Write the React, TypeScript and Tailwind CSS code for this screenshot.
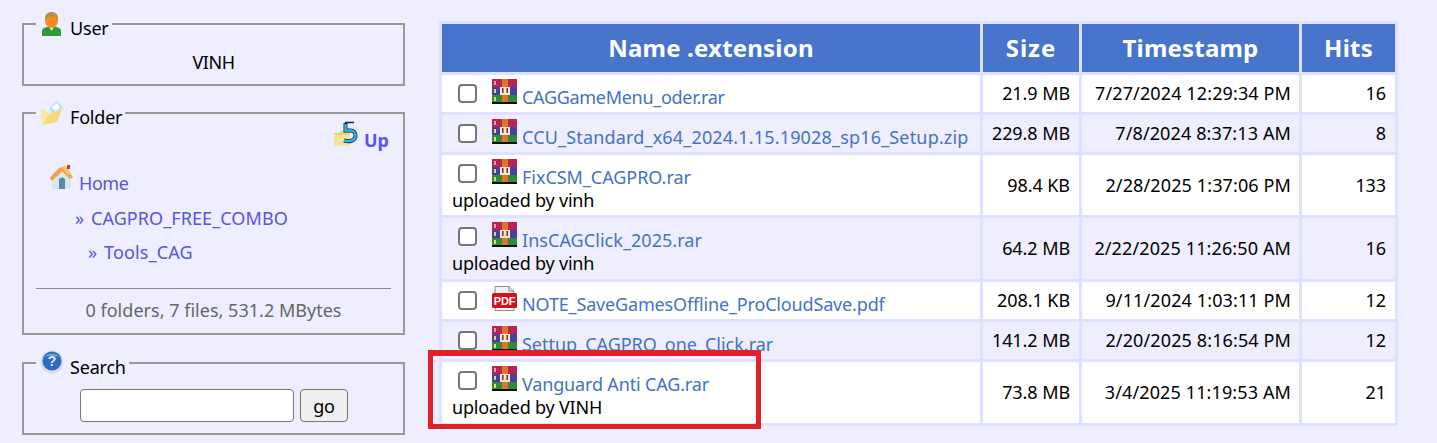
const files = [
  { name: "CAGGameMenu_oder.rar", size: "21.9 MB", time: "7/27/2024 12:29:34 PM", hits: "16", h: "h-[37px]", alt: false, icon: "rar", by: "", track: "tracking-[-0.3px]" },
  { name: "CCU_Standard_x64_2024.1.15.19028_sp16_Setup.zip", size: "229.8 MB", time: "7/8/2024 8:37:13 AM", hits: "8", h: "h-[37px]", alt: true, icon: "rar", by: "", track: "tracking-[0.17px]" },
  { name: "FixCSM_CAGPRO.rar", size: "98.4 KB", time: "2/28/2025 1:37:06 PM", hits: "133", h: "h-[60px]", alt: false, icon: "rar", by: "uploaded by vinh", track: "tracking-[-0.04px]" },
  { name: "InsCAGClick_2025.rar", size: "64.2 MB", time: "2/22/2025 11:26:50 AM", hits: "16", h: "h-[61px]", alt: true, icon: "rar", by: "uploaded by vinh", track: "tracking-[0.05px]" },
  { name: "NOTE_SaveGamesOffline_ProCloudSave.pdf", size: "208.1 KB", time: "9/11/2024 1:03:11 PM", hits: "12", h: "h-[37px]", alt: false, icon: "pdf", by: "", track: "tracking-[-0.16px]" },
  { name: "Settup_CAGPRO_one_Click.rar", size: "141.2 MB", time: "2/20/2025 8:16:54 PM", hits: "12", h: "h-[37px]", alt: true, icon: "rar", by: "", track: "tracking-[-0.01px]" },
  { name: "Vanguard Anti CAG.rar", size: "73.8 MB", time: "3/4/2025 11:19:53 AM", hits: "21", h: "h-[61px]", alt: false, icon: "rar", by: "uploaded by VINH", track: "tracking-[-0.16px]" },
];

function RarIcon() {
  return (
    <svg width="25" height="25" viewBox="0 0 25 25" className="block">
      <rect x="0" y="0" width="25" height="8" fill="#b5254f" />
      <rect x="0" y="8" width="25" height="8" fill="#4a3f9f" />
      <rect x="0" y="16" width="25" height="7" fill="#2f8a3c" />
      <rect x="0" y="23" width="25" height="2" fill="#111111" />
      <rect x="10" y="0" width="6" height="23" fill="#e0752a" />
      <rect x="8" y="8" width="10" height="8" fill="#f4e8d8" />
      <rect x="10" y="9" width="1.5" height="5" fill="#7a3010" />
      <rect x="14.5" y="9" width="1.5" height="5" fill="#7a3010" />
      <rect x="2" y="10" width="2" height="4" fill="#e8d070" />
      <rect x="2" y="18" width="2" height="4" fill="#d8e070" />
      <rect x="2" y="2" width="2" height="4" fill="#e8a0a0" />
    </svg>
  );
}

function PdfIcon() {
  return (
    <svg width="25" height="25" viewBox="0 0 25 25" className="block">
      <path d="M3 0.5H17L22 5V24.5H3Z" fill="#f2f2f2" stroke="#8a8a8a" />
      <path d="M17 0.5V5H22" fill="#dddddd" stroke="#8a8a8a" />
      <rect x="0" y="7" width="25" height="15" rx="1.5" fill="#d0141c" />
      <text x="12.5" y="18.5" textAnchor="middle" fontSize="11" fontWeight="700" fill="#ffffff" fontFamily="Liberation Sans, sans-serif">PDF</text>
    </svg>
  );
}

function UserIcon() {
  return (
    <svg width="24" height="26" viewBox="0 0 24 26" className="block">
      <path d="M2 25V20C2 17 6 15.5 11.5 15.5S21 17 21 20V25Z" fill="#2e9a3a" />
      <path d="M9 15.5H14L11.5 20Z" fill="#e8f5e0" />
      <ellipse cx="11.5" cy="9" rx="6.5" ry="8" fill="#f58a20" />
      <path d="M5 8C5 3 8 1 11.5 1S18 3 18 8C15 5 9 5 5 8Z" fill="#b89050" />
    </svg>
  );
}

function FolderMailIcon() {
  return (
    <svg width="24" height="26" viewBox="0 0 24 26" className="block">
      <path d="M9 9L17 0.5L23 8L14 16Z" fill="#bfe0f2" />
      <path d="M12 7L17 3L20 8L15 11Z" fill="#ffffff" />
      <path d="M1 8L10 14L22 9L17 22L2 25Z" fill="#f4d87a" />
      <path d="M1 8L2 25L10 14Z" fill="#f9e8a8" />
    </svg>
  );
}

function UpIcon() {
  return (
    <svg width="25" height="26" viewBox="0 0 25 26" className="block">
      <path d="M0 12H5L7 10H16V25H0Z" fill="#f2d56c" />
      <path d="M0 14H16V25H0Z" fill="#f7e39a" />
      <path d="M11 1.5H20" stroke="#102a4a" strokeWidth="1.5" />
      <path d="M11.5 2V9.5H16C20 9.5 22 12 21.5 15.5C20.5 20 15.5 21 10 19.5" fill="none" stroke="#102a4a" strokeWidth="4" />
      <path d="M11.5 3V9.5H16C20 9.5 22 12 21.5 15.5C20.5 20 15.5 21 10 19.5" fill="none" stroke="#35b4ea" strokeWidth="2.4" />
    </svg>
  );
}

function HomeIcon() {
  return (
    <svg width="25" height="25" viewBox="0 0 25 25" className="block">
      <path d="M3 12L13 4L22 12V22Q22 24 20 24H5Q3 24 3 22Z" fill="#d5e7f3" />
      <path d="M10 14Q13 11 16 14V24H10Z" fill="#5d88a8" />
      <path d="M0.5 13L10 3L16 1L24 12L21 14L13 6.5L3 16Z" fill="#f4a24a" />
      <path d="M13 2L17 1L22 9L19 10Z" fill="#f8c070" />
      <rect x="18" y="0" width="3" height="4" fill="#b84030" />
    </svg>
  );
}

function HelpIcon() {
  return (
    <svg width="24" height="24" viewBox="0 0 24 24" className="block">
      <circle cx="12" cy="12" r="11.5" fill="#d5deec" />
      <circle cx="12" cy="11" r="9.5" fill="#2f6bc0" />
      <path d="M5 7C7 3 17 3 19 7C15 5 9 5 5 7Z" fill="#8db8e8" />
      <text x="12" y="16" textAnchor="middle" fontSize="14" fontWeight="700" fill="#dfe9f7" fontFamily="Liberation Sans, sans-serif">?</text>
    </svg>
  );
}

function Box({ icon, title, className, children }: { icon: React.ReactNode; title: string; className: string; children: React.ReactNode }) {
  return (
    <fieldset className={`border-2 border-[#999999] w-[383px] min-w-0 ${className}`}>
      <legend className="ml-[12px] flex h-[28px] pl-[4px] pr-[3px] text-[18px] text-black">
        <span className="w-[30px] mt-[1px]">{icon}</span>
        <span className="mt-[8px] leading-[20px]">{title}</span>
      </legend>
      {children}
    </fieldset>
  );
}

export default function App() {
  return (
    <div className="w-[1437px] h-[443px] overflow-hidden relative bg-[#eeeeff] flex items-start pl-[22px] font-['Noto_Sans',sans-serif] tracking-[-0.2px] text-[18px] text-black">
      <aside className="w-[383px] shrink-0 flex flex-col pt-[10px]">
        <Box icon={<UserIcon />} title="User" className="h-[76px]">
          <div className="text-center leading-[24px] pt-[12px] tracking-[-0.45px]">VINH</div>
        </Box>
        <Box icon={<FolderMailIcon />} title="Folder" className="h-[236px] mt-[13px]">
          <div className="flex justify-end items-start gap-[5px] pr-[14px] h-[26px] -mt-[6px] font-bold text-[#5555ee] tracking-[0px]">
            <UpIcon />
            <span className="mt-[7px] leading-[24px]">Up</span>
          </div>
          <div className="flex items-start pl-[25px] mt-[18px] h-[30px] text-[#5555dd] tracking-[-0.45px]">
            <HomeIcon />
            <span className="ml-[5px] mt-[6px] leading-[24px]">Home</span>
          </div>
          <div className="pl-[51px] mt-[9px] leading-[28px] text-[#5555dd] tracking-[0.08px]"><span className="mr-[2px]">»</span> CAGPRO_FREE_COMBO</div>
          <div className="pl-[64px] mt-[6px] leading-[28px] text-[#5555dd] tracking-[0.13px]"><span className="mr-[2px]">»</span> Tools_CAG</div>
          <div className="mx-[12px] mt-[22px] border-t border-[#888899]" />
          <div className="text-center text-[#666666] leading-[24px] mt-[9px] tracking-[0.02px]">0 folders, 7 files, 531.2 MBytes</div>
        </Box>
        <Box icon={<HelpIcon />} title="Search" className="h-[86px] mt-[14px]">
          <div className="flex items-center gap-[6px] pl-[56px] mt-[12px]">
            <input className="w-[214px] h-[33px] bg-white border border-[#767676] rounded-[4px]" />
            <button className="w-[48px] h-[33px] bg-[#efefef] border border-[#767676] rounded-[4px] text-black text-[18px] leading-none">go</button>
          </div>
        </Box>
      </aside>
      <main className="ml-[34px] mt-[21px] bg-[#e0e0ff] w-[959px]">
        <table className="w-full border-separate border-spacing-[3px] table-fixed">
          <colgroup>
            <col className="w-[538px]" />
            <col className="w-[96px]" />
            <col className="w-[217px]" />
            <col className="w-[93px]" />
          </colgroup>
          <thead>
            <tr className="h-[48px] bg-[#4775cc] text-white text-[24px] font-bold tracking-[0.2px]">
              <th className="text-center font-bold">Name .extension</th>
              <th className="text-center font-bold tracking-[1px]">Size</th>
              <th className="text-center font-bold">Timestamp</th>
              <th className="text-center font-bold">Hits</th>
            </tr>
          </thead>
          <tbody>
            {files.map((f) => (
              <tr key={f.name} className={`${f.h} ${f.alt ? "bg-[#eeeeff]" : "bg-white"}`}>
                <td className="align-top pl-[10px]">
                  <div className="flex items-start pt-[4px] h-[33px]">
                    <input type="checkbox" className="appearance-none w-[19px] h-[19px] mt-[5px] ml-[6px] bg-white border-2 border-[#767676] rounded-[4px]" />
                    <span className="ml-[15px]">{f.icon === "pdf" ? <PdfIcon /> : <RarIcon />}</span>
                    <span className={`ml-[5px] mt-[6px] leading-[24px] text-[#4472c4] whitespace-nowrap ${f.track}`}>{f.name}</span>
                  </div>
                  {f.by && <div className="leading-[24px] whitespace-nowrap">{f.by}</div>}
                </td>
                <td className="text-right pr-[9px] tracking-[-0.08px]">{f.size}</td>
                <td className="text-right pr-[8px] whitespace-nowrap tracking-[0.12px]">{f.time}</td>
                <td className="text-right pr-[9px] tracking-[-0.1px]">{f.hits}</td>
              </tr>
            ))}
          </tbody>
        </table>
      </main>
      <div className="absolute left-[428px] top-[350px] w-[333px] h-[79px] border-[5px] border-t-[6px] border-[#e0202a] pointer-events-none" />
    </div>
  );
}
